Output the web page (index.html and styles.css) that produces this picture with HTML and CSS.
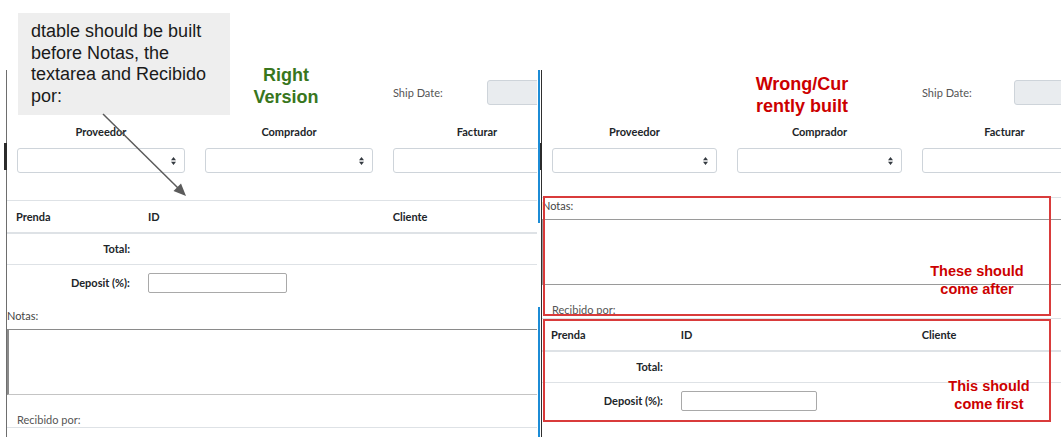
FILE: index.html
```html
<!DOCTYPE html>
<html lang="en">
<head>
    <meta charset="UTF-8">
    <meta name="viewport" content="width=device-width, initial-scale=1.0">
    <title>Orden de compra - dtable</title>
    <link rel="stylesheet" href="styles.css">
</head>
<body>

<div class="stage">

    <!-- Right version: dtable first, then notes -->
    <div class="shot left">
        <div class="viewport">
            <div class="form">
                <div class="cols ship-row">
                    <div></div>
                    <div></div>
                    <div class="ship"><span>Ship Date:</span><input class="date" type="text" readonly></div>
                </div>
                <div class="cols heads">
                    <div>Proveedor</div>
                    <div>Comprador</div>
                    <div>Facturar</div>
                </div>
                <div class="cols pickers">
                    <div><div class="select"><svg viewBox="0 0 5 8" width="5" height="8"><path d="M0 3.2 2.5 0 5 3.2zM0 4.8 2.5 8 5 4.8z"/></svg></div></div>
                    <div><div class="select"><svg viewBox="0 0 5 8" width="5" height="8"><path d="M0 3.2 2.5 0 5 3.2zM0 4.8 2.5 8 5 4.8z"/></svg></div></div>
                    <div><div class="select"><svg viewBox="0 0 5 8" width="5" height="8"><path d="M0 3.2 2.5 0 5 3.2zM0 4.8 2.5 8 5 4.8z"/></svg></div></div>
                </div>

                <table class="dtable">
                    <colgroup><col class="c1"><col class="c2"><col></colgroup>
                    <thead>
                        <tr><th>Prenda</th><th>ID</th><th>Cliente</th></tr>
                    </thead>
                    <tbody>
                        <tr class="total"><td class="label">Total:</td><td></td><td></td></tr>
                        <tr class="deposit"><td class="label">Deposit (%):</td><td><input type="text"></td><td></td></tr>
                    </tbody>
                </table>

                <div class="notes">
                    <span class="cap">Notas:</span>
                    <textarea></textarea>
                    <div class="by">Recibido por:</div>
                </div>
                <div class="rule"></div>
            </div>
        </div>
    </div>

    <div class="edge"><span></span><span></span></div>

    <!-- Current build: notes come out before the dtable -->
    <div class="shot right">
        <div class="viewport">
            <div class="form">
                <div class="cols ship-row">
                    <div></div>
                    <div></div>
                    <div class="ship"><span>Ship Date:</span><input class="date" type="text" readonly></div>
                </div>
                <div class="cols heads">
                    <div>Proveedor</div>
                    <div>Comprador</div>
                    <div>Facturar</div>
                </div>
                <div class="cols pickers">
                    <div><div class="select"><svg viewBox="0 0 5 8" width="5" height="8"><path d="M0 3.2 2.5 0 5 3.2zM0 4.8 2.5 8 5 4.8z"/></svg></div></div>
                    <div><div class="select"><svg viewBox="0 0 5 8" width="5" height="8"><path d="M0 3.2 2.5 0 5 3.2zM0 4.8 2.5 8 5 4.8z"/></svg></div></div>
                    <div><div class="select"><svg viewBox="0 0 5 8" width="5" height="8"><path d="M0 3.2 2.5 0 5 3.2zM0 4.8 2.5 8 5 4.8z"/></svg></div></div>
                </div>

                <div class="notes">
                    <span class="cap">Notas:</span>
                    <textarea></textarea>
                    <div class="by">Recibido por:</div>
                </div>

                <table class="dtable">
                    <colgroup><col class="c1"><col class="c2"><col></colgroup>
                    <thead>
                        <tr><th>Prenda</th><th>ID</th><th>Cliente</th></tr>
                    </thead>
                    <tbody>
                        <tr class="total"><td class="label">Total:</td><td></td><td></td></tr>
                        <tr class="deposit"><td class="label">Deposit (%):</td><td><input type="text"></td><td></td></tr>
                    </tbody>
                </table>
            </div>
        </div>
    </div>

    <!-- annotations -->
    <div class="callout">dtable should be built before Notas, the textarea and Recibido por:</div>
    <svg class="pointer" viewBox="98 108 95 95" width="95" height="95">
        <line x1="103" y1="114" x2="178" y2="188" stroke="#5b5b5b" stroke-width="1.5"/>
        <path d="M186 196 173.5 191 181 183.5z" fill="#5b5b5b"/>
    </svg>
    <div class="tag good">Right<br>Version</div>
    <div class="tag bad">Wrong/Cur<br>rently built</div>

    <div class="mark after"></div>
    <div class="mark first"></div>
    <div class="say after">These should<br>come after</div>
    <div class="say first">This should<br>come first</div>
</div>

</body>
</html>
```

FILE: styles.css
```css
* {
    box-sizing: border-box;
}
body {
    margin: 0;
    width: 1061px;
    height: 437px;
    overflow: hidden;
    background: #fff;
    font-family: Lato, "Open Sans", sans-serif;
    font-size: 11px;
    color: #212529;
}
.stage {
    position: relative;
    display: flex;
    height: 437px;
    padding-top: 70px;
}

/* the two captured pages */
.shot {
    position: relative;
    height: 367px;
}
.shot.left {
    --w: 564px;
    --ship: 94px;
    --dep: 139px;
    flex: none;
    margin-left: 6px;
    width: 531px;
    border-left: 1px solid #6e6e6e;
}
.shot.right {
    --w: 555px;
    --ship: 92px;
    --dep: 136px;
    flex: 1;
    min-width: 0;
    margin-left: 1px;
    border-left: 1px solid #2f2f2f;
}
.shot::before {
    content: "";
    position: absolute;
    top: 73px;
    left: -3px;
    width: 3px;
    height: 27px;
    background: #2b2b2b; /* scroll thumb stub */
}
.shot.right::before {
    left: -2px;
    width: 2px;
}
.viewport {
    height: 100%;
    overflow: hidden;
    padding-top: 10px;
}
.form {
    width: var(--w);
}
.edge {
    display: flex;
    flex-direction: column;
    flex: none;
    width: 2px;
    margin-left: 1px;
    height: 367px;
}
.edge span {
    background: #1c8cd6;
}
.edge span:first-child {
    height: 153px;
}
.edge span:last-child {
    margin-top: 84px;
    flex: 1;
}

/* header fields */
.cols {
    display: grid;
    grid-template-columns: repeat(3, minmax(0, 1fr));
}
.cols > div {
    padding: 0 10px;
}
.ship {
    display: flex;
    align-items: center;
    height: 25px;
    color: #555;
}
.ship span {
    flex: none;
    width: var(--ship);
}
.date {
    flex: 1 1 0;
    width: 0;
    min-width: 0;
    height: 25px;
    border: 1px solid #ced4da;
    border-radius: 3px;
    background: #e9ecef;
}
.heads {
    margin-top: 19px;
    line-height: 16px;
    font-weight: 700;
    text-align: center;
}
.pickers {
    margin-top: 8px;
}
.select {
    display: flex;
    align-items: center;
    justify-content: flex-end;
    height: 25px;
    padding-right: 8px;
    border: 1px solid #ced4da;
    border-radius: 3px;
    background: #fff;
}
.select svg {
    fill: #343a40;
}

/* dtable */
.dtable {
    width: var(--w);
    table-layout: fixed;
    border-collapse: separate;
    border-spacing: 0;
    margin-top: 27px;
}
.dtable .c1 {
    width: 23.4%;
}
.dtable .c2 {
    width: 43.4%;
}
.dtable th {
    padding: 8px 9px;
    line-height: 15px;
    text-align: left;
    border-top: 1px solid #dee2e6;
    border-bottom: 2px solid #dee2e6;
}
.dtable td {
    padding: 8px 9px;
    line-height: 14px;
    font-weight: 700;
    vertical-align: middle;
}
.dtable td.label {
    text-align: right;
}
.dtable .deposit td {
    border-top: 1px solid #dee2e6;
}
.deposit input {
    display: block;
    width: var(--dep);
    height: 20px;
    border: 1px solid #a9a9a9;
    border-radius: 2px;
}

/* notes block */
.notes {
    margin-top: 8px;
}
.notes .cap {
    display: block;
    line-height: 14px;
    color: #444;
}
.notes textarea {
    display: block;
    width: var(--w);
    height: 66px;
    margin: 6px 0 0;
    resize: none;
    border: 1px solid #c4c4c4;
    border-top-color: #8a8a8a;
    border-left: 2px solid #8a8a8a;
    background: #fff;
}
.notes .by {
    margin-top: 18px;
    padding-left: 10px;
    line-height: 14px;
    color: #555;
}
.rule {
    border-top: 1px solid #dee2e6;
}
.right .notes {
    margin-top: 24px;
    padding-top: 1px;
    border-top: 1px solid #dee2e6;
}
.right .notes textarea {
    border: 1px solid #9a9a9a;
}
.right .dtable {
    margin-top: 1px;
}

/* annotations */
.callout {
    position: absolute;
    left: 18px;
    top: 13px;
    width: 212px;
    height: 102px;
    padding: 8px 14px 0 13px;
    background: #eeeeee;
    font: 18px/21.6px "Liberation Sans", Arial, sans-serif;
    color: #1a1a1a;
}
.pointer {
    position: absolute;
    left: 98px;
    top: 108px;
}
.tag {
    position: absolute;
    font: 700 18px/21.6px "Liberation Sans", Arial, sans-serif;
    text-align: center;
}
.tag.good {
    left: 236px;
    top: 65px;
    width: 100px;
    color: #38761d;
}
.tag.bad {
    left: 742px;
    top: 74px;
    width: 120px;
    color: #cc0000;
}
.mark {
    position: absolute;
    left: 543px;
    width: 508px;
    border: 2px solid #d93b3b;
}
.mark.after {
    top: 196px;
    height: 120px;
}
.mark.first {
    top: 319px;
    height: 103px;
}
.say {
    position: absolute;
    width: 100px;
    font: 700 14.5px/17.5px "Liberation Sans", Arial, sans-serif;
    color: #cc0000;
    text-align: center;
}
.say.after {
    left: 927px;
    top: 263px;
}
.say.first {
    left: 939px;
    top: 378px;
}
```
